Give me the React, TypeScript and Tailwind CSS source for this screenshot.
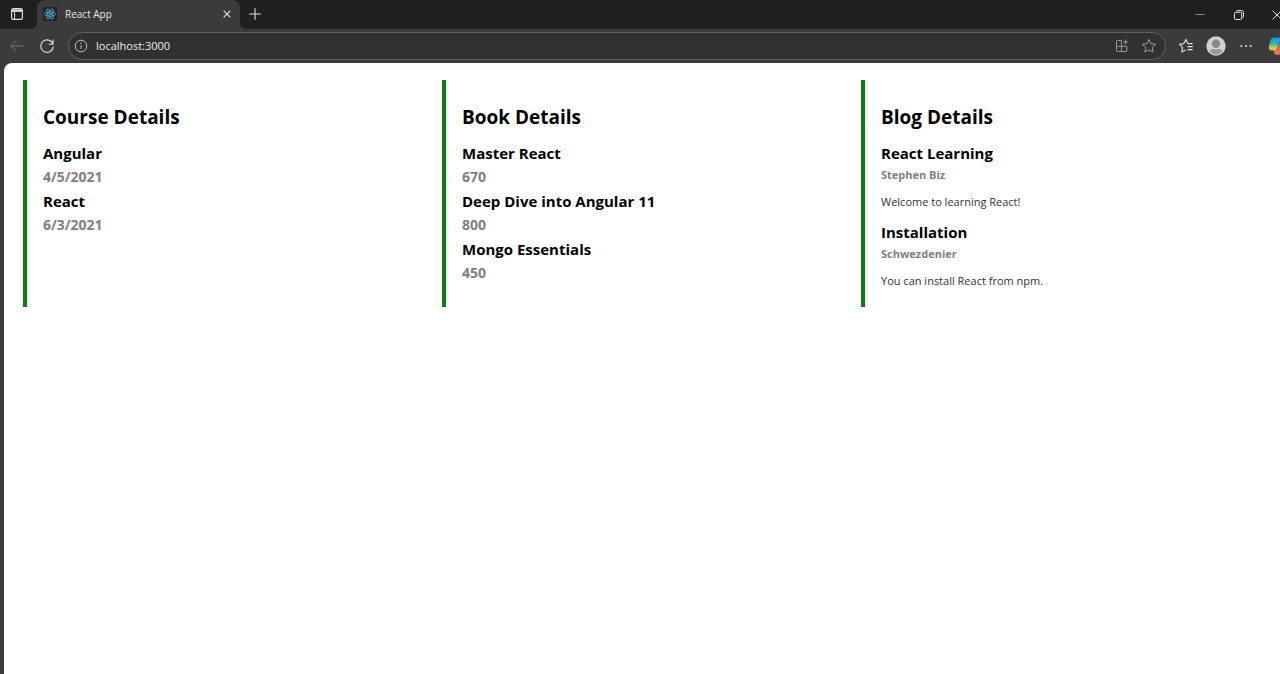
import type { ReactNode } from "react";

type Entry = { name: string; value: string };
type Post = { title: string; author: string; text: string };

const courses: Entry[] = [
  { name: "Angular", value: "4/5/2021" },
  { name: "React", value: "6/3/2021" },
];

const books: Entry[] = [
  { name: "Master React", value: "670" },
  { name: "Deep Dive into Angular 11", value: "800" },
  { name: "Mongo Essentials", value: "450" },
];

const posts: Post[] = [
  { title: "React Learning", author: "Stephen Biz", text: "Welcome to learning React!" },
  { title: "Installation", author: "Schwezdenier", text: "You can install React from npm." },
];

function IconButton({ label, className, children }: { label: string; className?: string; children: ReactNode }) {
  return (
    <button type="button" aria-label={label} className={`flex shrink-0 items-center justify-center ${className ?? ""}`}>
      {children}
    </button>
  );
}

function ReactLogo() {
  return (
    <svg viewBox="0 0 14 14" className="size-3.5 shrink-0" aria-hidden="true">
      <rect width="14" height="14" rx="1.5" fill="#1d252b" />
      <g fill="none" stroke="#5cb8d3" strokeWidth="0.75">
        <ellipse cx="7" cy="7" rx="5.7" ry="2.2" />
        <ellipse cx="7" cy="7" rx="5.7" ry="2.2" transform="rotate(60 7 7)" />
        <ellipse cx="7" cy="7" rx="5.7" ry="2.2" transform="rotate(120 7 7)" />
      </g>
      <circle cx="7" cy="7" r="1.1" fill="#5cb8d3" />
    </svg>
  );
}

function TitleBar() {
  return (
    <header className="-mr-4 flex h-[29px] items-stretch bg-[#202020] text-[#e4e4e4]">
      <IconButton label="Tab actions" className="w-[37px] pb-0.5 pr-[3px]">
        <svg viewBox="0 0 12 12" className="size-3" fill="none" stroke="currentColor">
          <rect x="0.6" y="0.6" width="10.8" height="10.8" rx="2" strokeWidth="1.1" />
          <path d="M1 1.5h10v2.3H1z" fill="currentColor" stroke="none" />
          <path d="M3.6 3.5v7.5" strokeWidth="0.9" />
        </svg>
      </IconButton>
      <div className="relative flex w-[203px] items-center rounded-t-lg bg-[#3b3b3b] pb-0.5 pl-1.5 pr-2">
        <svg viewBox="0 0 6 6" className="absolute -left-1.5 bottom-0 size-1.5" aria-hidden="true">
          <path d="M6 0v6H0a6 6 0 0 0 6-6z" fill="#3b3b3b" />
        </svg>
        <svg viewBox="0 0 6 6" className="absolute -right-1.5 bottom-0 size-1.5" aria-hidden="true">
          <path d="M0 0v6h6a6 6 0 0 1-6-6z" fill="#3b3b3b" />
        </svg>
        <ReactLogo />
        <span className="ml-2 flex-1 text-[10px] leading-4">React App</span>
        <IconButton label="Close tab" className="size-2.5">
          <svg viewBox="0 0 8 8" className="size-2" fill="none" stroke="currentColor" strokeWidth="1.1">
            <path d="M0.6 0.6l6.8 6.8M7.4 0.6L0.6 7.4" />
          </svg>
        </IconButton>
      </div>
      <IconButton label="New tab" className="w-[30px] pb-0.5">
        <svg viewBox="0 0 12 12" className="size-3" fill="none" stroke="currentColor" strokeWidth="1.1">
          <path d="M6 0.2v11.6M0.2 6h11.6" />
        </svg>
      </IconButton>
      <div className="ml-auto flex">
        <IconButton label="Minimize" className="w-[39px]">
          <svg viewBox="0 0 10 10" className="size-2.5" fill="none" stroke="#8a8a8a" strokeWidth="1">
            <path d="M0.5 4.5h9" />
          </svg>
        </IconButton>
        <IconButton label="Restore" className="w-[39px]">
          <svg viewBox="0 0 10 10" className="size-2.5" fill="none" stroke="currentColor" strokeWidth="1">
            <rect x="0.5" y="2.3" width="7.2" height="7.2" rx="1.2" />
            <path d="M2.3 1.6Q2.5 0.5 3.6 0.5H7.5a2 2 0 0 1 2 2V6.6q0 1-1 1.3" />
          </svg>
        </IconButton>
        <IconButton label="Close window" className="w-[38px]">
          <svg viewBox="0 0 8 8" className="size-2.5" fill="none" stroke="currentColor" strokeWidth="0.8">
            <path d="M0.5 0.5l7 7M7.5 0.5l-7 7" />
          </svg>
        </IconButton>
      </div>
    </header>
  );
}

function ToolBar() {
  return (
    <nav className="-mr-4 flex h-[34px] items-center bg-[#3b3b3b] pl-2 text-[#e0e0e0]">
      <IconButton label="Back" className="size-[18px]">
        <svg viewBox="0 0 14 12" className="h-3 w-3.5" fill="none" stroke="#777777" strokeWidth="1">
          <path d="M13.7 6H0.8M6.3 0.6L0.8 6l5.5 5.4" />
        </svg>
      </IconButton>
      <IconButton label="Refresh" className="ml-3 size-[18px]">
        <svg viewBox="0 0 14 14" className="size-3.5" fill="none" stroke="currentColor" strokeWidth="1.1">
          <path d="M12.9 5.2A6.2 6.2 0 1 0 13.2 7.4M13 0.8v4.4H8.7" />
        </svg>
      </IconButton>
      <div className="ml-3 flex h-7 flex-1 items-center rounded-full border border-[#606060] bg-[#313131] pl-[5px] pr-2">
        <IconButton label="View site information" className="size-3.5">
          <svg viewBox="0 0 14 14" className="size-3.5" fill="none" stroke="#bdbdbd" strokeWidth="1">
            <circle cx="7" cy="7" r="5.8" />
            <path d="M7 6.2v3.9" />
            <circle cx="7" cy="4.3" r="0.7" fill="#bdbdbd" stroke="none" />
          </svg>
        </IconButton>
        <input
          type="text"
          aria-label="Address"
          defaultValue="localhost:3000"
          className="ml-2 min-w-0 flex-1 bg-transparent text-[11px] leading-4 text-[#ececec] outline-none"
        />
        <IconButton label="Install app" className="size-3.5">
          <svg viewBox="0 0 14 14" className="size-3.5" fill="none" stroke="#989898" strokeWidth="1">
            <path d="M6.5 1.5h-4a1 1 0 0 0-1 1v9a1 1 0 0 0 1 1H11a1 1 0 0 0 1-1V8a.7.7 0 0 0-.7-.7H1.5M6.5 1.5v11M10.5 0.5v5M8 3h5" />
          </svg>
        </IconButton>
        <IconButton label="Add to favorites" className="ml-3 size-4">
          <svg viewBox="0 0 16 16" className="size-4" fill="none" stroke="#a0a0a0" strokeWidth="1" strokeLinejoin="round">
            <path d="M8 1.5l2 4.2 4.600.6-3.4 3.2.9 4.6L8 11.9l-4.1 2.2.9-4.6L1.4 6.3 6 5.7z" />
          </svg>
        </IconButton>
      </div>
      <IconButton label="Favorites" className="ml-3 size-4">
        <svg viewBox="0 0 16 16" className="size-4" fill="none" stroke="currentColor" strokeWidth="1.1" strokeLinejoin="round">
          <path d="M7.5 12L3.8 14l.8-4.6L1.3 6.2l4.5-.6L7.9 1.5l2 4.1h4.8M9.5 8.6h5.2M9.5 11.6h5.2" />
        </svg>
      </IconButton>
      <IconButton label="Profile" className="ml-3 size-5">
        <svg viewBox="0 0 20 20" className="size-5">
          <circle cx="10" cy="10" r="9.7" fill="#d2d0ce" />
          <circle cx="10" cy="7.7" r="4.2" fill="#8a8886" />
          <path d="M4 15.6q0-2.4 2.4-2.4h7.2q2.4 0 2.4 2.4-2.4 3-6 3t-6-3z" fill="#979593" />
        </svg>
      </IconButton>
      <IconButton label="Settings and more" className="ml-3 size-4">
        <svg viewBox="0 0 16 16" className="size-4" fill="currentColor">
          <circle cx="3.3" cy="8" r="1" />
          <circle cx="8" cy="8" r="1" />
          <circle cx="12.7" cy="8" r="1" />
        </svg>
      </IconButton>
      <IconButton label="Copilot" className="ml-3.5 mr-2 size-5">
        <svg viewBox="0 0 20 20" className="size-5">
          <defs>
            <linearGradient id="copilotLeft" x1="0" y1="0" x2="0" y2="1">
              <stop offset="0" stopColor="#1b8fe8" />
              <stop offset="0.45" stopColor="#27b3b8" />
              <stop offset="0.75" stopColor="#b5d33d" />
              <stop offset="1" stopColor="#f5c22d" />
            </linearGradient>
            <linearGradient id="copilotRight" x1="0" y1="0" x2="0" y2="1">
              <stop offset="0" stopColor="#b35be0" />
              <stop offset="0.6" stopColor="#f0617e" />
              <stop offset="1" stopColor="#f47a3c" />
            </linearGradient>
          </defs>
          <path d="M14.5 5.5H16c3 0 3.6 2 2.9 4.6l-1.3 5c-.6 2.4-1.6 3.6-3.8 3.6H8.5c-1.5 0-2.2-1-2.6-2.7l-.4-1.5h1.7c1.5 0 2.2-.8 2.7-2.4l1.3-4.3c.5-1.6 1.5-1.7 3.3-1.7z" fill="url(#copilotRight)" />
          <path d="M5.9 1.5h5.6c1.5 0 2.2 1 2.6 2.6l.4 1.4h-1.2c-1.5 0-2.3.8-2.7 2.3l-1.3 4.4c-.5 1.7-1.3 2.3-3 2.3H4c-3 0-3.6-2-2.9-4.600l1.2-4.8c.6-2.4 1.5-3.600 3.6-3.600z" fill="url(#copilotLeft)" />
        </svg>
      </IconButton>
    </nav>
  );
}

function Column({ title, children }: { title: string; children: ReactNode }) {
  return (
    <section className="min-w-0 flex-1 border-l-4 border-[#0b7d0e] pb-2 pl-4 pt-6">
      <h2 className="mb-[11px] text-[19px] font-bold leading-[26px]">{title}</h2>
      {children}
    </section>
  );
}

function EntryList({ entries }: { entries: Entry[] }) {
  return (
    <>
      {entries.map((entry) => (
        <div key={entry.name} className="font-bold">
          <h3 className="text-[15px] leading-6">{entry.name}</h3>
          <p className="text-sm leading-6 text-[#808080]">{entry.value}</p>
        </div>
      ))}
    </>
  );
}

export default function App() {
  return (
    <div className="flex min-h-screen flex-col overflow-hidden bg-[#3b3b3b] font-['Open_Sans','Noto_Sans',sans-serif]">
      <TitleBar />
      <ToolBar />
      <main className="ml-1 flex-1 rounded-tl-lg bg-white pl-[19px] pt-[17px] text-black">
        <div className="flex">
          <Column title="Course Details">
            <EntryList entries={courses} />
          </Column>
          <Column title="Book Details">
            <EntryList entries={books} />
          </Column>
          <Column title="Blog Details">
            {posts.map((post) => (
              <article key={post.title} className="mb-2">
                <h3 className="text-[15px] font-bold leading-6">{post.title}</h3>
                <p className="mb-[7px] text-[11px] font-bold leading-5 text-[#808080]">{post.author}</p>
                <p className="text-[11px] leading-5 text-[#333333]">{post.text}</p>
              </article>
            ))}
          </Column>
        </div>
      </main>
    </div>
  );
}
